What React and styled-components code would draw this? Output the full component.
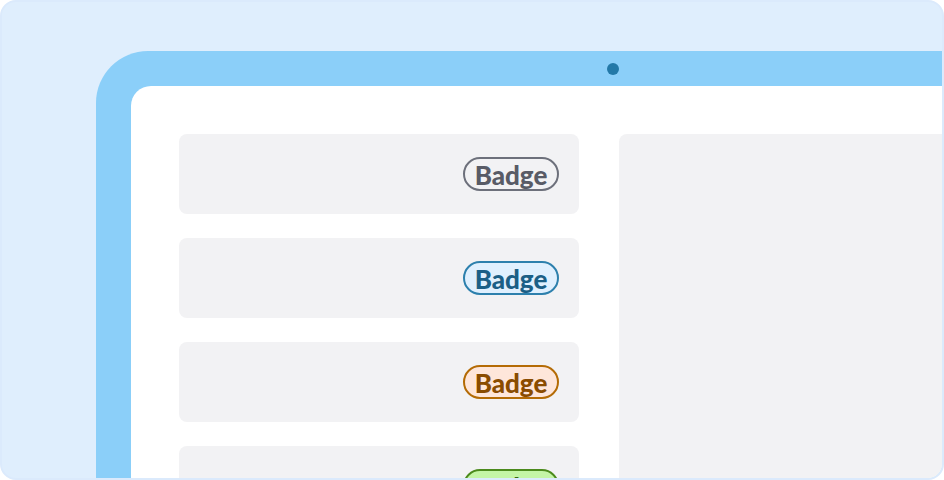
import styled, { createGlobalStyle } from "styled-components";

const GlobalStyle = createGlobalStyle`
  html, body {
    margin: 0;
    padding: 0;
    background: #ffffff;
  }
  * {
    box-sizing: border-box;
  }
`;

const Canvas = styled.div`
  width: 944px;
  height: 480px;
  background: #dfeefd;
  border: 2px solid #dbeafc;
  border-radius: 16px;
  overflow: hidden;
  padding: 49px 0 0 94px;
`;

const Device = styled.div`
  position: relative;
  width: 1000px;
  height: 600px;
  background: #8bcff9;
  border-radius: 52px 0 0 0;
  padding: 35px;
`;

const Camera = styled.span`
  position: absolute;
  top: 12px;
  left: 511px;
  width: 12px;
  height: 12px;
  border-radius: 50%;
  background: #2379a8;
`;

const Screen = styled.div`
  height: 100%;
  background: #ffffff;
  border-radius: 20px 0 0 0;
  padding: 48px;
  display: grid;
  grid-template-columns: 400px 1fr;
  gap: 40px;
`;

const List = styled.div`
  display: flex;
  flex-direction: column;
  gap: 24px;
`;

const Row = styled.div`
  height: 80px;
  background: #f2f2f4;
  border-radius: 8px;
  display: flex;
  align-items: center;
  justify-content: flex-end;
  padding-right: 20px;
`;

const Panel = styled.div`
  background: #f2f2f4;
  border-radius: 8px;
`;

const tones = {
  neutral: { border: "#6d707b", color: "#585b66", bg: "transparent" },
  info: { border: "#2d80ad", color: "#1b5f86", bg: "#e0f0fe" },
  warning: { border: "#b46b05", color: "#8a4c00", bg: "#fee6da" },
  success: { border: "#4b8a1c", color: "#36680f", bg: "#c4f5a6" },
};

const Badge = styled.span`
  display: inline-flex;
  align-items: center;
  justify-content: center;
  width: 96px;
  height: 34px;
  border-radius: 17px;
  border: 2px solid ${(p) => tones[p.$tone].border};
  background: ${(p) => tones[p.$tone].bg};
  color: ${(p) => tones[p.$tone].color};
  font-family: Lato, "Open Sans", sans-serif;
  font-weight: 900;
  font-size: 26px;
  line-height: 1;
  padding-top: 2px;
`;

export default function App() {
  return (
    <>
      <GlobalStyle />
      <Canvas>
        <Device>
          <Camera />
          <Screen>
            <List>
              <Row><Badge $tone="neutral">Badge</Badge></Row>
              <Row><Badge $tone="info">Badge</Badge></Row>
              <Row><Badge $tone="warning">Badge</Badge></Row>
              <Row><Badge $tone="success">Badge</Badge></Row>
            </List>
            <Panel />
          </Screen>
        </Device>
      </Canvas>
    </>
  );
}
